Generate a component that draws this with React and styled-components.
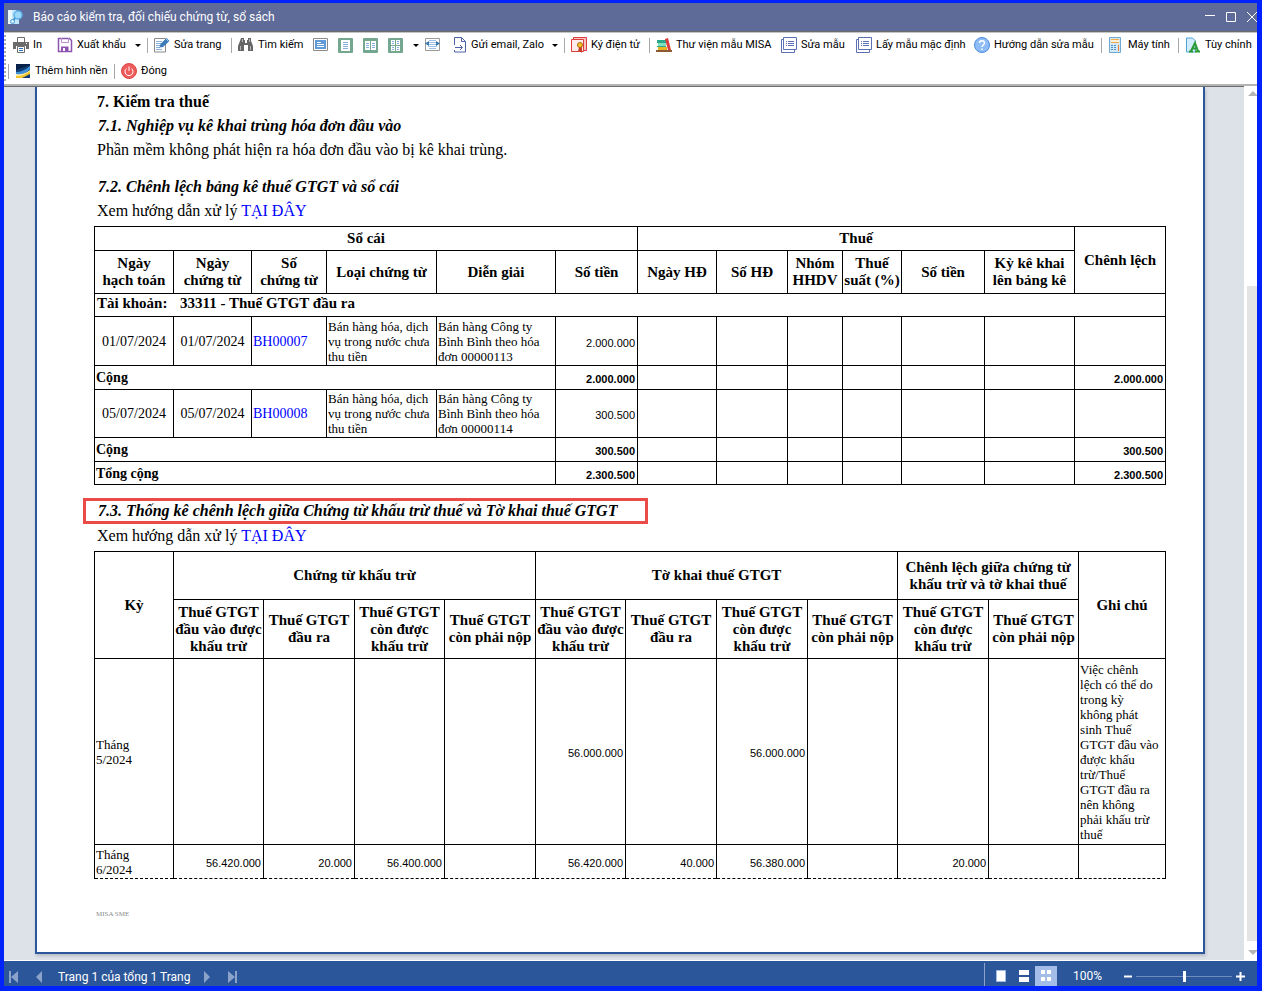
import React, { Fragment } from 'react';
import styled, { createGlobalStyle, css } from 'styled-components';

const UI = 'Roboto, "Noto Sans", "Liberation Sans", sans-serif';
const SERIF = '"Liberation Serif", "Times New Roman", serif';
const SANS = '"Liberation Sans", Arial, sans-serif';

const Global = createGlobalStyle`
  *, *::before, *::after { box-sizing: border-box; }
  body { margin: 0; background: #0023fb; }
  button { font: inherit; color: inherit; background: none; border: 0; padding: 0; margin: 0; cursor: pointer; }
`;

/* ---------- window frame ---------- */

const Window = styled.div`
  display: flex;
  flex-direction: column;
  min-height: 100vh;
  border: solid #0023fb;
  border-width: 3px 5px 5px 4px;
  font-family: ${UI};
  background: #fff;
`;

const TitleBar = styled.header`
  display: flex;
  align-items: center;
  height: 29px;
  padding-left: 3px;
  overflow: hidden;
  background: #5e6b98;
  border-bottom: 1px solid #6b6b6b;
  color: #fff;
`;

const Title = styled.h1`
  flex: 1;
  margin: 0 0 0 9px;
  font-size: 12px;
  font-weight: 400;
  line-height: 24px;
`;

const WindowButton = styled.button`
  width: 21px;
  height: 24px;
  flex: none;
  display: flex;
  align-items: center;
  justify-content: flex-end;
`;

/* ---------- toolbar ---------- */

const Toolbar = styled.div`
  display: flex;
  border-top: 1px solid #c4c4c4;
  border-bottom: 2px solid #b4b4b4;
  background: #fff;
  padding-bottom: 1px;
`;

const Grip = styled.div`
  width: 2px;
  margin-top: 2px;
  background: repeating-linear-gradient(#a9a9a9 0 2px, #fff 2px 4px);
`;

const ToolRows = styled.div`
  flex: 1;
  min-width: 0;
  display: flex;
  flex-direction: column;
  gap: 2px;
`;

const ToolRow = styled.div`
  display: flex;
  align-items: center;
  height: 24px;
  padding-left: ${(p) => (p.$second ? 2 : 7)}px;
`;

const ToolButton = styled.button`
  flex: none;
  display: flex;
  align-items: center;
  gap: 4px;
  width: ${(p) => p.$width}px;
  height: 22px;
  font-size: 11px;
  line-height: 22px;
  color: #000;
  white-space: nowrap;
`;

const ToolSeparator = styled.span`
  flex: none;
  width: 1px;
  height: 15px;
  margin-right: 6px;
  background: #a8a8a8;
`;

const Caret = styled.span`
  margin-left: auto;
  margin-right: 6px;
  border: 3px solid transparent;
  border-top-color: #000;
  border-bottom: 0;
`;

/* ---------- preview pane ---------- */

const Preview = styled.main`
  flex: 1;
  display: flex;
  background: #dde1e8;
  border-bottom: 1px solid #fff;
`;

const Canvas = styled.div`
  flex: 1;
  min-width: 0;
  display: flex;
  border-top: 1px solid #6b6b6b;
  padding: 0 39px 6px 31px;
`;

const Page = styled.article`
  flex: 1;
  min-width: 0;
  display: flex;
  flex-direction: column;
  padding: 3px 37px 32px 57px;
  background: #fff;
  border: 2px solid #2b579a;
  border-top: 0;
  box-shadow: 1px 2px 3px #b9bdc6;
  font-family: ${SERIF};
  color: #000;
`;

const SectionTitle = styled.h2`
  margin: 0;
  padding-left: 3px;
  font-size: 16px;
  line-height: 24px;
`;

const SubTitle = styled.h3`
  margin: 0;
  padding-left: 4px;
  font-size: 16px;
  font-style: italic;
  line-height: 24px;
  ${(p) =>
    p.$marked &&
    css`
      align-self: flex-start;
      margin: 13px 0 0 -11px;
      padding: 0 28px 0 12px;
      border: 3px solid #ea4b46;
      line-height: 20px;
    `}
`;

const Paragraph = styled.p`
  margin: 0;
  padding-left: 3px;
  font-size: 16px;
  line-height: 23px;
  margin-bottom: ${(p) => p.$after || 0}px;
`;

const GuideLink = styled.a`
  color: #0000ff;
  text-decoration: none;
`;

const Table = styled.table`
  width: 100%;
  table-layout: fixed;
  border-collapse: collapse;
  font-size: 14px;
  line-height: 15px;
`;

const Head = styled.th`
  padding: 0;
  border: 1px solid #000;
  font-size: 15px;
  line-height: 17px;
  white-space: nowrap;
`;

const Row = styled.tr`
  height: ${(p) => p.$height}px;
`;

const Cell = styled.td`
  padding: 0 1px;
  border: 1px solid #000;
  text-align: ${(p) => p.$align || 'left'};
  font-weight: ${(p) => (p.$bold ? 700 : 400)};
  font-size: ${(p) => (p.$small ? 13 : 14)}px;
  white-space: nowrap;
  ${(p) => p.$dashed && 'border-bottom-style: dashed;'}
`;

const Amount = styled(Cell)`
  padding: 4px 2px 0 0;
  font-family: ${SANS};
  font-size: ${(p) => (p.$bold ? 11 : 11)}px;
  text-align: right;
`;

const AccountCell = styled(Cell)`
  padding: 0 0 3px 2px;
  font-size: 15px;
  font-weight: 700;
`;

const AccountLabel = styled.span`
  display: inline-block;
  width: 83px;
`;

const PageFooter = styled.footer`
  margin-top: auto;
  padding-left: 2px;
  font-size: 7px;
  line-height: 12px;
  color: #8a8a8a;
`;

/* ---------- scroll bar ---------- */

const ScrollBar = styled.div`
  flex: none;
  width: 13px;
  display: flex;
  flex-direction: column;
  background: #fff;
  padding-left: 3px;
`;

const ScrollButton = styled.button`
  height: 15px;
  overflow: hidden;
  display: flex;
  align-items: center;
`;

const ScrollTrack = styled.div`
  flex: 1;
  display: flex;
  align-items: flex-end;
  padding-bottom: 4px;
`;

const ScrollThumb = styled.div`
  width: 100%;
  height: 78%;
  background: #e4e4e4;
`;

/* ---------- status bar ---------- */

const StatusBar = styled.footer`
  display: flex;
  align-items: stretch;
  height: 25px;
  background: #2b579a;
  color: #fff;
  font-size: 12px;
`;

const Pager = styled.nav`
  flex: 1;
  display: flex;
  align-items: center;
  padding: 6px 0 0 4px;
`;

const PagerButton = styled.button`
  width: 25px;
  height: 16px;
  display: flex;
  align-items: center;
  color: #8ba3cb;
`;

const PagerText = styled.span`
  width: 145px;
  line-height: 16px;
  white-space: nowrap;
`;

const ViewModes = styled.div`
  display: flex;
  padding-left: 4px;
  margin-top: 2px;
  border-left: 1px solid #8ba3cb;
`;

const ViewButton = styled.button`
  width: ${(p) => (p.$active ? 22 : 23)}px;
  margin-top: 3px;
  display: flex;
  align-items: center;
  justify-content: center;
  background: ${(p) => (p.$active ? '#a3bde8' : 'none')};
`;

const ZoomArea = styled.div`
  display: flex;
  align-items: center;
  padding: 5px 10px 0 16px;
`;

const ZoomValue = styled.output`
  width: 50px;
  line-height: 16px;
`;

const ZoomButton = styled.button`
  width: 11px;
  height: 12px;
  display: flex;
  align-items: center;
`;

const ZoomSlider = styled.input`
  appearance: none;
  width: 96px;
  height: 12px;
  margin: 0 4px 0 2px;
  background: linear-gradient(#6f8dbd, #6f8dbd) center / 100% 1px no-repeat;
  &::-webkit-slider-thumb {
    appearance: none;
    width: 3px;
    height: 11px;
    background: #fff;
  }
`;

/* ---------- drawings ---------- */

const Svg = ({ w = 16, h = 16, children }) => (
  <svg width={w} height={h} viewBox={`0 0 ${w} ${h}`} fill="none" aria-hidden="true">
    {children}
  </svg>
);

const AppIcon = () => (
  <Svg w={17} h={17}>
    <path d="M1 1h8l3 3v11H1z" fill="#bfe6fb" />
    <path d="M1 1h4v14H1z" fill="#e9f8ff" />
    <circle cx="11" cy="6" r="4" fill="#9ed8f8" stroke="#5cb2e8" strokeWidth="1.5" />
    <path d="M8 9l-2 3" stroke="#3f8fd0" strokeWidth="2" />
    <circle cx="5.500" cy="12.500" r="2" fill="#d8f0ff" stroke="#4b9bd8" />
  </Svg>
);

const PrintIcon = () => (
  <Svg>
    <path d="M4.500 5V.5h7V5" fill="#fff" stroke="#6b6b6b" />
    <path d="M0 5h16v7h-3v-3H3v3H0z" fill="#6b6b6b" />
    <path d="M13 6h1v1h-1z" fill="#fff" />
    <path d="M4.500 9.500h7v6h-7z" fill="#fff" stroke="#6b6b6b" />
    <path d="M6 11.500h4M6 13.500h4" stroke="#2f6fc0" />
  </Svg>
);

const SaveIcon = () => (
  <Svg>
    <path d="M1.500 1.500h11l2 2v11h-13z" fill="#fff" stroke="#8d55b0" strokeWidth="1.500" />
    <path d="M4.500 1v4.500h7V1" stroke="#b58fcd" />
    <path d="M4 14V9.500h7.500V14z" fill="#8d55b0" />
    <path d="M6 11h2v3H6z" fill="#fff" />
  </Svg>
);

const EditPageIcon = () => (
  <Svg>
    <path d="M.5 1.500h11v13.500H.5z" fill="#fff" stroke="#8b8b8b" />
    <path d="M2 4.500h6M2 6.500h5M2 8.500h4M2 10.500h4M2 12.500h6" stroke="#86aede" />
    <path d="M5.500 10.500L6.500 7l6-6 3 3-6.500 6z" fill="#3a7bb8" />
    <path d="M12 2l2.500 2.500" stroke="#9ac4e8" />
  </Svg>
);

const BinocularsIcon = () => (
  <Svg>
    <path d="M3 1h3v2h1v3h2V3h1V1h3v3l2 5v5h-5V8H6v6H0V9l2-5z" fill="#656565" />
    <path d="M4.500 2v3M11.500 2v3M2.500 9v4M12.500 9v4" stroke="#b5b5b5" />
  </Svg>
);

const ThumbIcon = () => (
  <Svg w={15} h={14}>
    <path d="M.5.5h14v12H.5z" fill="#fff" stroke="#8c8c8c" />
    <path d="M2 2h11v9H2z" fill="#5f9bd8" />
    <path d="M4 4.500h4M4 6.500h7M4 8.500h7" stroke="#fff" />
  </Svg>
);

const PagesIcon = ({ kind }) => (
  <Svg w={15} h={15}>
    <rect width="15" height="15" rx="1" fill="#74a78f" />
    {kind === 'one' && (
      <>
        <path d="M3 2h9v11H3z" fill="#fff" />
        <path d="M5 4.500h5M5 6.500h5M5 8.500h5M5 10.500h5" stroke="#86aee0" />
      </>
    )}
    {kind === 'two' && (
      <>
        <path d="M2 3h5v9H2zM8 3h5v9H8z" fill="#fff" />
        <path d="M3 5.500h3M3 7.500h3M3 9.500h3M9 5.500h3M9 7.500h3M9 9.500h3" stroke="#86aee0" />
      </>
    )}
    {kind === 'four' && (
      <>
        <path d="M3 2h4v5H3zM8 2h4v5H8zM3 8h4v5H3zM8 8h4v5H8z" fill="#fff" />
        <path d="M4 3.500h2M4 5.500h2M9 3.500h2M9 5.500h2M4 9.500h2M4 11.500h2M9 9.500h2M9 11.500h2" stroke="#86aee0" />
      </>
    )}
  </Svg>
);

const FitIcon = () => (
  <Svg w={15} h={14}>
    <path d="M.5.5h14v12H.5z" fill="#fff" stroke="#9a9a9a" />
    <path d="M4 2.500h7M3 4.500h9M3 6.500h9M3 8.500h9M4 10.500h7" stroke="#9cc2ea" />
    <path d="M0 5.500L4 3v5zM15 5.500L11 3v5z" fill="#3a78ae" />
  </Svg>
);

const SendIcon = () => (
  <Svg w={14} h={16}>
    <path d="M1.500 8V.5h7l4 4v10.500h-11V13" fill="#fff" stroke="#4d60a8" />
    <path d="M8.500.5v4h4" stroke="#4d60a8" />
    <path d="M2 10.500h7M7 8l2.500 2.500L7 13" stroke="#4d60a8" />
  </Svg>
);

const SignIcon = () => (
  <Svg>
    <path d="M2.500.5h13v13h-13z" fill="#f6c4c2" stroke="#dd3c38" />
    <path d="M.5 2.500h12v12H.5z" fill="#fdeceb" stroke="#dd3c38" />
    <path d="M8 10l-1 5 2-1 2 2 0-6z" fill="#c93a2c" />
    <circle cx="9" cy="8" r="2.500" fill="#f6c52c" stroke="#a8670f" />
  </Svg>
);

const BooksIcon = () => (
  <Svg>
    <path d="M1 3h9v3H1z" fill="#2ba88c" />
    <path d="M2 6h8v3H2z" fill="#7fe0bd" />
    <path d="M1 9h9v1H1z" fill="#2ba88c" />
    <path d="M2 10h9v3H2z" fill="#eab420" />
    <path d="M9 2l3-1 3 12h-3z" fill="#dc3b3b" />
    <path d="M0 13h16v2H0z" fill="#8a5a33" />
  </Svg>
);

const TemplateIcon = () => (
  <Svg>
    <path d="M3 2.500H.5v13h13V13" stroke="#5b70b5" />
    <path d="M2.500.5h13v12h-13z" fill="#fff" stroke="#5b70b5" />
    <path d="M5 4.500h1M7 4.500h6M5 6.500h1M7 6.500h6M5 8.500h1M7 8.500h6" stroke="#5b70b5" />
  </Svg>
);

const HelpIcon = () => (
  <Svg>
    <circle cx="8" cy="8" r="7.500" fill="#8dbcf6" stroke="#4b8be0" />
    <path d="M5.500 6c0-3 5-3 5 0 0 2-2.500 2-2.500 4M8 11.500v1.500" stroke="#fff" strokeWidth="1.500" />
  </Svg>
);

const CalculatorIcon = () => (
  <Svg>
    <path d="M1.500.5h11v15h-11z" fill="#d5e8f6" stroke="#6fa9d2" />
    <path d="M3 2h8v4H3z" fill="#f6a94a" />
    <path d="M3 3h8v2H3z" fill="#fff0d8" />
    <path d="M3 8.500h6M3 10.500h6M3 12.500h6" stroke="#4f94c8" strokeDasharray="2 1" />
    <path d="M10 8h1v6h-1z" fill="#e87f2f" />
  </Svg>
);

const CustomizeIcon = () => (
  <Svg>
    <path d="M1.500 1v14h9V4L7.500 1z" fill="#d2ecfb" stroke="#4ea6d8" />
    <path d="M4 14.500h4M10 14.500h5M6 14l4-8 3 8M7.500 11.500h4.500" stroke="#2b9b33" strokeWidth="2" />
  </Svg>
);

const WallpaperIcon = () => (
  <Svg>
    <path d="M1 1h14v14H1z" fill="#123c74" />
    <path d="M1 1h14v1L1 7z" fill="#07204a" />
    <path d="M1 9c5 0 9-2 14-6v3c-4 4-8 6-14 6z" fill="#3f92d8" />
    <path d="M1 11c6 1 10-1 14-4v2c-4 4-7 5-9 6H1z" fill="#fff4b0" />
    <path d="M1 13c6 0 10-2 14-5v3l-8 4H1z" fill="#f3c62e" />
  </Svg>
);

const PowerIcon = () => (
  <Svg>
    <circle cx="8" cy="8" r="7.500" fill="#ee5b5b" stroke="#e04747" />
    <path d="M5.500 5.500a4 4 0 1 0 5 0M8 3.500V8" stroke="#fff" />
  </Svg>
);

/* ---------- data ---------- */

const toolbarItems = [
  { label: 'In', icon: <PrintIcon />, width: 44 },
  { label: 'Xuất khẩu', icon: <SaveIcon />, width: 90, menu: true },
  { separator: true },
  { label: 'Sửa trang', icon: <EditPageIcon />, width: 77 },
  { separator: true },
  { label: 'Tìm kiếm', icon: <BinocularsIcon />, width: 75 },
  { name: 'Hình thu nhỏ', icon: <ThumbIcon />, width: 25 },
  { name: 'Một trang', icon: <PagesIcon kind="one" />, width: 25 },
  { name: 'Hai trang', icon: <PagesIcon kind="two" />, width: 25 },
  { name: 'Nhiều trang', icon: <PagesIcon kind="four" />, width: 37, menu: true },
  { name: 'Vừa chiều rộng', icon: <FitIcon />, width: 28 },
  { label: 'Gửi email, Zalo', icon: <SendIcon />, width: 111, menu: true },
  { separator: true },
  { label: 'Ký điện tử', icon: <SignIcon />, width: 78 },
  { separator: true },
  { label: 'Thư viện mẫu MISA', icon: <BooksIcon />, width: 125 },
  { label: 'Sửa mẫu', icon: <TemplateIcon />, width: 75 },
  { label: 'Lấy mẫu mặc định', icon: <TemplateIcon />, width: 118 },
  { label: 'Hướng dẫn sửa mẫu', icon: <HelpIcon />, width: 127 },
  { separator: true },
  { label: 'Máy tính', icon: <CalculatorIcon />, width: 70 },
  { separator: true },
  { label: 'Tùy chỉnh', icon: <CustomizeIcon />, width: 72 },
];

const toolbarItemsMore = [
  { separator: true },
  { label: 'Thêm hình nền', icon: <WallpaperIcon />, width: 99 },
  { separator: true },
  { label: 'Đóng', icon: <PowerIcon />, width: 50 },
];

const ledgerColumns = [79, 78, 75, 110, 119, 82, 79, 71, 55, 59, 83, 90, null];
const ledgerHeads = [
  ['Ngày', 'hạch toán'], ['Ngày', 'chứng từ'], ['Số', 'chứng từ'], ['Loại chứng từ'], ['Diễn giải'], ['Số tiền'],
  ['Ngày HĐ'], ['Số HĐ'], ['Nhóm', 'HHDV'], ['Thuế', 'suất (%)'], ['Số tiền'], ['Kỳ kê khai', 'lên bảng kê'],
];
const ledgerEntries = [
  {
    date: '01/07/2024', code: 'BH00007', amount: '2.000.000', height: 49,
    kind: ['Bán hàng hóa, dịch', 'vụ trong nước chưa', 'thu tiền'],
    note: ['Bán hàng Công ty', 'Bình Bình theo hóa', 'đơn 00000113'],
  },
  {
    date: '05/07/2024', code: 'BH00008', amount: '300.500', height: 48,
    kind: ['Bán hàng hóa, dịch', 'vụ trong nước chưa', 'thu tiền'],
    note: ['Bán hàng Công ty', 'Bình Bình theo hóa', 'đơn 00000114'],
  },
];

const taxColumns = [79, 90, 91, 90, 91, 90, 91, 91, 90, 91, 90, null];
const taxHeads = [
  ['Thuế GTGT', 'đầu vào được', 'khấu trừ'], ['Thuế GTGT', 'đầu ra'],
  ['Thuế GTGT', 'còn được', 'khấu trừ'], ['Thuế GTGT', 'còn phải nộp'],
];
const taxRows = [
  {
    period: ['Tháng', '5/2024'], height: 186,
    values: ['', '', '', '', '56.000.000', '', '56.000.000', '', '', ''],
    note: ['Việc chênh', 'lệch có thể do', 'trong kỳ', 'không phát', 'sinh Thuế', 'GTGT đầu vào', 'được khấu', 'trừ/Thuế', 'GTGT đầu ra', 'nên không', 'phải khấu trừ', 'thuế'],
  },
  {
    period: ['Tháng', '6/2024'], height: 34, last: true,
    values: ['56.420.000', '20.000', '56.400.000', '', '56.420.000', '40.000', '56.380.000', '', '20.000', ''],
    note: [],
  },
];

const Lines = ({ of }) =>
  of.map((line, i) => (
    <Fragment key={i}>
      {i > 0 && <br />}
      {line}
    </Fragment>
  ));

const Columns = ({ of }) => (
  <colgroup>
    {of.map((w, i) => (
      <col key={i} width={w || undefined} />
    ))}
  </colgroup>
);

const Blanks = ({ count }) => Array.from({ length: count }, (_, i) => <Cell key={i} />);

const ToolItems = ({ items }) =>
  items.map((item, i) =>
    item.separator ? (
      <ToolSeparator key={i} />
    ) : (
      <ToolButton key={i} type="button" $width={item.width} aria-label={item.name}>
        {item.icon}
        {item.label}
        {item.menu && <Caret />}
      </ToolButton>
    )
  );

const TotalRow = ({ label, value, diff, height }) => (
  <Row $height={height}>
    <Cell colSpan={5} $bold>{label}</Cell>
    <Amount $bold>{value}</Amount>
    <Blanks count={6} />
    <Amount $bold>{diff}</Amount>
  </Row>
);

const LedgerTable = () => (
  <Table>
    <Columns of={ledgerColumns} />
    <thead>
      <Row $height={24}>
        <Head colSpan={6}>Sổ cái</Head>
        <Head colSpan={6}>Thuế</Head>
        <Head rowSpan={2}>Chênh lệch</Head>
      </Row>
      <Row $height={43}>
        {ledgerHeads.map((h, i) => (
          <Head key={i}><Lines of={h} /></Head>
        ))}
      </Row>
    </thead>
    <tbody>
      <Row $height={23}>
        <AccountCell colSpan={13}>
          <AccountLabel>Tài khoản:</AccountLabel>33311 - Thuế GTGT đầu ra
        </AccountCell>
      </Row>
      {ledgerEntries.map((e) => (
        <Fragment key={e.code}>
          <Row $height={e.height}>
            <Cell $align="center">{e.date}</Cell>
            <Cell $align="center">{e.date}</Cell>
            <Cell><GuideLink href="#">{e.code}</GuideLink></Cell>
            <Cell $small><Lines of={e.kind} /></Cell>
            <Cell $small><Lines of={e.note} /></Cell>
            <Amount>{e.amount}</Amount>
            <Blanks count={7} />
          </Row>
          <TotalRow label="Cộng" value={e.amount} diff={e.amount} height={24} />
        </Fragment>
      ))}
      <TotalRow label="Tổng cộng" value="2.300.500" diff="2.300.500" height={23} />
    </tbody>
  </Table>
);

const TaxTable = () => (
  <Table>
    <Columns of={taxColumns} />
    <thead>
      <Row $height={48}>
        <Head rowSpan={2}>Kỳ</Head>
        <Head colSpan={4}>Chứng từ khấu trừ</Head>
        <Head colSpan={4}>Tờ khai thuế GTGT</Head>
        <Head colSpan={2}><Lines of={['Chênh lệch giữa chứng từ', 'khấu trừ và tờ khai thuế']} /></Head>
        <Head rowSpan={2}>Ghi chú</Head>
      </Row>
      <Row $height={59}>
        {[...taxHeads, ...taxHeads, taxHeads[2], taxHeads[3]].map((h, i) => (
          <Head key={i}><Lines of={h} /></Head>
        ))}
      </Row>
    </thead>
    <tbody>
      {taxRows.map((r) => (
        <Row key={r.period[1]} $height={r.height}>
          <Cell $small $dashed={r.last}><Lines of={r.period} /></Cell>
          {r.values.map((v, i) => (
            <Amount key={i} $dashed={r.last}>{v}</Amount>
          ))}
          <Cell $small $dashed={r.last}><Lines of={r.note} /></Cell>
        </Row>
      ))}
    </tbody>
  </Table>
);

const Guide = () => (
  <Paragraph $after={4}>
    Xem hướng dẫn xử lý <GuideLink href="#">TẠI ĐÂY</GuideLink>
  </Paragraph>
);

export default function App() {
  return (
    <Window>
      <Global />
      <TitleBar>
        <AppIcon />
        <Title>Báo cáo kiểm tra, đối chiếu chứng từ, sổ sách</Title>
        <WindowButton type="button" aria-label="Thu nhỏ">
          <Svg w={10} h={10}><path d="M0 3.500h10" stroke="#fff" /></Svg>
        </WindowButton>
        <WindowButton type="button" aria-label="Phóng to">
          <Svg w={10} h={10}><path d="M.5.5h9v9h-9z" stroke="#fff" /></Svg>
        </WindowButton>
        <WindowButton type="button" aria-label="Đóng cửa sổ">
          <Svg w={10} h={10}><path d="M0 0l10 10M0 10L10 0" stroke="#fff" /></Svg>
        </WindowButton>
      </TitleBar>

      <Toolbar>
        <Grip />
        <ToolRows>
          <ToolRow><ToolItems items={toolbarItems} /></ToolRow>
          <ToolRow $second><ToolItems items={toolbarItemsMore} /></ToolRow>
        </ToolRows>
      </Toolbar>

      <Preview>
        <Canvas>
          <Page>
            <SectionTitle>7. Kiểm tra thuế</SectionTitle>
            <SubTitle>7.1. Nghiệp vụ kê khai trùng hóa đơn đầu vào</SubTitle>
            <Paragraph $after={14}>Phần mềm không phát hiện ra hóa đơn đầu vào bị kê khai trùng.</Paragraph>
            <SubTitle>7.2. Chênh lệch bảng kê thuế GTGT và sổ cái</SubTitle>
            <Guide />
            <LedgerTable />
            <SubTitle $marked>7.3. Thống kê chênh lệch giữa Chứng từ khấu trừ thuế và Tờ khai thuế GTGT</SubTitle>
            <Guide />
            <TaxTable />
            <PageFooter>MISA SME</PageFooter>
          </Page>
        </Canvas>
        <ScrollBar>
          <ScrollButton type="button" aria-label="Cuộn lên">
            <Svg w={10} h={5}><path d="M1 5l5-5 5 5z" fill="#b5b5b5" /></Svg>
          </ScrollButton>
          <ScrollTrack><ScrollThumb /></ScrollTrack>
          <ScrollButton type="button" aria-label="Cuộn xuống">
            <Svg w={10} h={5}><path d="M1 0l5 5 5-5z" fill="#b5b5b5" /></Svg>
          </ScrollButton>
        </ScrollBar>
      </Preview>

      <StatusBar>
        <Pager>
          <PagerButton type="button" aria-label="Trang đầu">
            <Svg w={11} h={12}><path d="M1 0h2v12H1zM10 0v12L3 6z" fill="currentColor" /></Svg>
          </PagerButton>
          <PagerButton type="button" aria-label="Trang trước">
            <Svg w={11} h={12}><path d="M9 0v12L3 6z" fill="currentColor" /></Svg>
          </PagerButton>
          <PagerText>Trang 1 của tổng 1 Trang</PagerText>
          <PagerButton type="button" aria-label="Trang sau">
            <Svg w={11} h={12}><path d="M1 0v12l6-6z" fill="currentColor" /></Svg>
          </PagerButton>
          <PagerButton type="button" aria-label="Trang cuối">
            <Svg w={11} h={12}><path d="M7 0h2v12H7zM0 0v12l7-6z" fill="currentColor" /></Svg>
          </PagerButton>
        </Pager>
        <ViewModes>
          <ViewButton type="button" aria-label="Một trang">
            <Svg w={10} h={12}><path d="M.5.5h9v11h-9z" fill="#fff" stroke="#a3bde8" /></Svg>
          </ViewButton>
          <ViewButton type="button" aria-label="Liên tục">
            <Svg w={10} h={12}><path d="M0 0h10v5H0zM0 7h10v5H0z" fill="#fff" /></Svg>
          </ViewButton>
          <ViewButton type="button" aria-label="Nhiều trang" $active>
            <Svg w={10} h={12}><path d="M0 0h4v4H0zM6 0h4v4H6zM0 7h4v4H0zM6 7h4v4H6z" fill="#fff" /></Svg>
          </ViewButton>
        </ViewModes>
        <ZoomArea>
          <ZoomValue>100%</ZoomValue>
          <ZoomButton type="button" aria-label="Thu nhỏ tỷ lệ">
            <Svg w={9} h={9}><path d="M1 4.500h8" stroke="#fff" strokeWidth="2" /></Svg>
          </ZoomButton>
          <ZoomSlider type="range" min="0" max="200" defaultValue="100" aria-label="Tỷ lệ thu phóng" />
          <ZoomButton type="button" aria-label="Phóng to tỷ lệ">
            <Svg w={9} h={9}><path d="M0 4.500h9M4.500 0v9" stroke="#fff" strokeWidth="2" /></Svg>
          </ZoomButton>
        </ZoomArea>
      </StatusBar>
    </Window>
  );
}
